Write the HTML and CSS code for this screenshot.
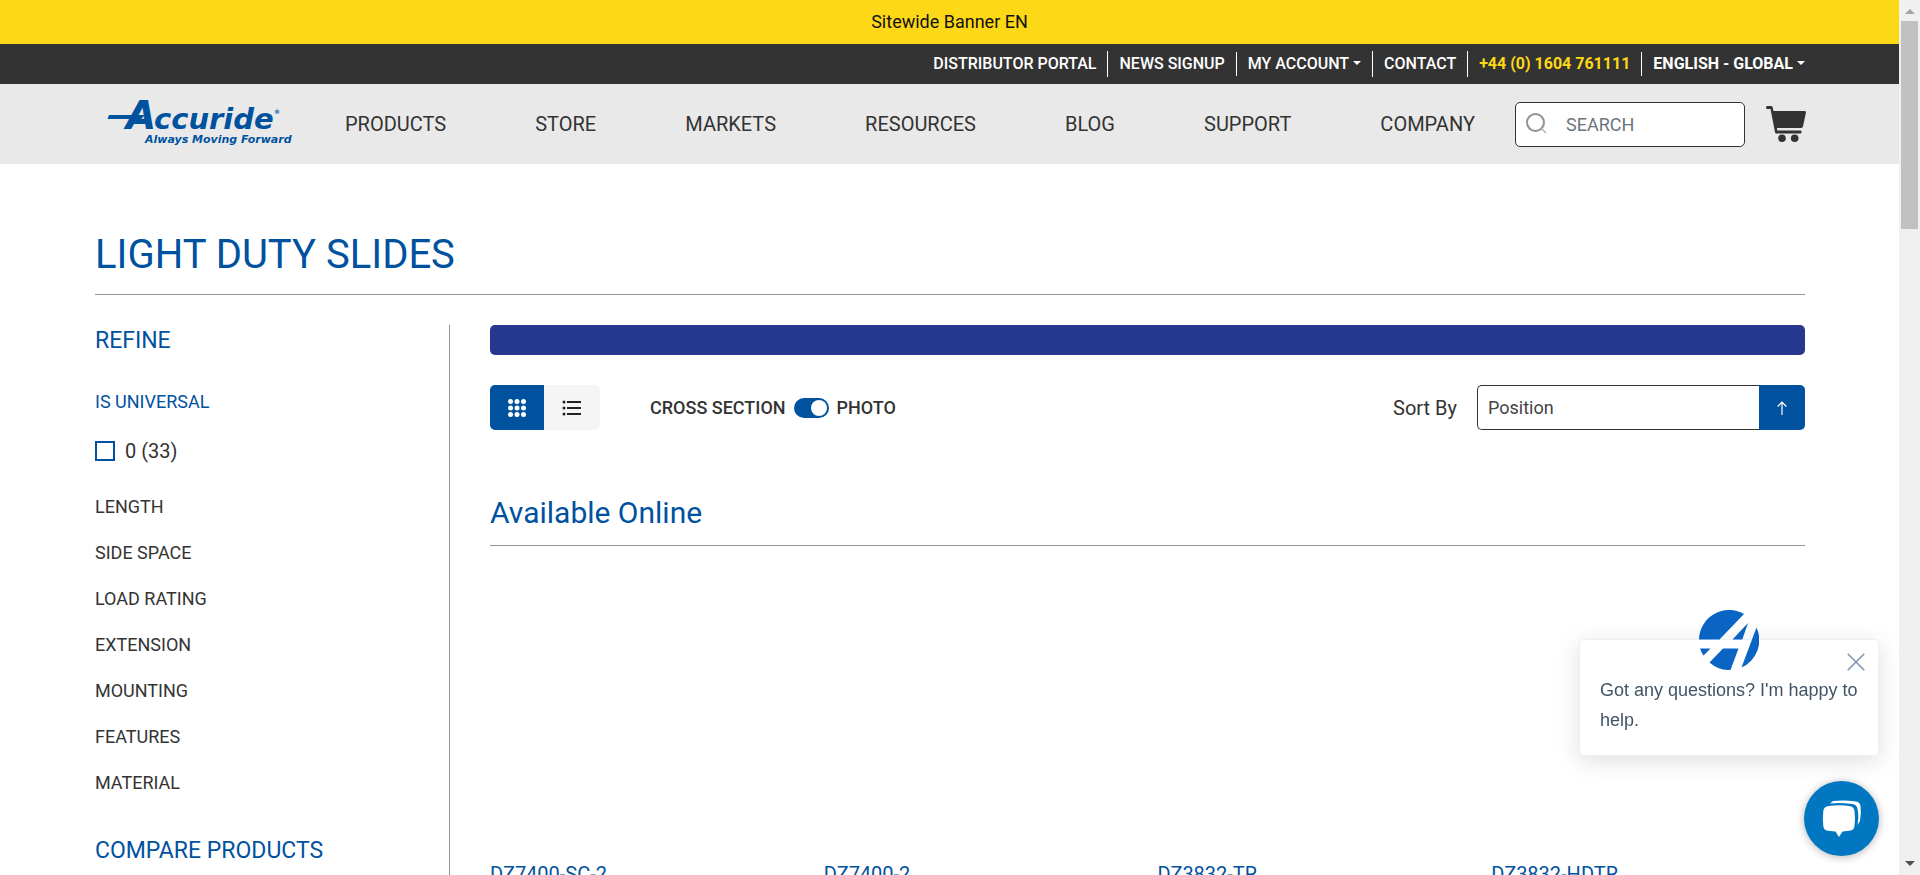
FILE: index.html
```html
<!DOCTYPE html>
<html lang="en">
<head>
<meta charset="utf-8">
<title>Light Duty Slides</title>
<link rel="stylesheet" href="styles.css">
</head>
<body>
<div class="window">
<div class="page">
  <div class="banner">Sitewide Banner EN</div>
  <nav class="topbar" aria-label="Account">
    <a href="#">DISTRIBUTOR PORTAL</a>
    <a href="#">NEWS SIGNUP</a>
    <button type="button" class="drop">MY ACCOUNT</button>
    <a href="#">CONTACT</a>
    <a href="#" class="phone">+44 (0) 1604 761111</a>
    <button type="button" class="drop strong">ENGLISH - GLOBAL</button>
  </nav>
  <header class="header">
    <a href="#" class="logo" aria-label="Accuride home">
      <svg width="200" height="60" viewBox="0 0 200 60">
        <path d="M14 21H50L46 25H12.500Z"/>
        <text x="31" y="35" class="logo-a">A</text>
        <text x="59" y="35" class="logo-name">ccuride</text>
        <text x="179" y="20" class="logo-reg">®</text>
        <text x="50" y="49" class="logo-tag">Always Moving Forward</text>
      </svg>
    </a>
    <nav class="menu" aria-label="Main">
      <a href="#">PRODUCTS</a>
      <a href="#">STORE</a>
      <a href="#">MARKETS</a>
      <a href="#">RESOURCES</a>
      <a href="#">BLOG</a>
      <a href="#">SUPPORT</a>
      <a href="#">COMPANY</a>
    </nav>
    <form class="search">
      <svg width="22" height="22" viewBox="0 0 22 22"><circle cx="9.500" cy="9.500" r="8.500" fill="none" stroke="#8e9295" stroke-width="2"/><path d="M15.500 15.500L20 20" stroke="#b5b5b5" stroke-width="1.500"/></svg>
      <input type="search" placeholder="SEARCH" aria-label="Search">
    </form>
    <a href="#" class="cart" aria-label="Cart">
      <svg width="40" height="36" viewBox="0 0 40 36" fill="#333"><path d="M1.200 0H5Q6.300 0 6.600 1.300L7.500 5H38.500Q40.300 5 39.900 6.800L37 20.600Q36.700 22 35.300 22H11L11.300 24.500H34.500Q35.600 24.500 35.600 26T34.500 27.500H10.500Q9.300 27.500 9 26.200L4.500 3H1.200Q0 3 0 1.500T1.200 0Z"/><circle cx="16" cy="32.200" r="3.800"/><circle cx="28.700" cy="32.200" r="3.800"/></svg>
    </a>
  </header>

  <main class="content">
    <h1>LIGHT DUTY SLIDES</h1>
    <div class="columns">
      <aside class="sidebar">
        <h2>REFINE</h2>
        <button type="button" class="facet open">IS UNIVERSAL</button>
        <label class="option"><input type="checkbox">0 (33)</label>
        <div class="facets">
          <button type="button" class="facet">LENGTH</button>
          <button type="button" class="facet">SIDE SPACE</button>
          <button type="button" class="facet">LOAD RATING</button>
          <button type="button" class="facet">EXTENSION</button>
          <button type="button" class="facet">MOUNTING</button>
          <button type="button" class="facet">FEATURES</button>
          <button type="button" class="facet">MATERIAL</button>
        </div>
        <h2>COMPARE PRODUCTS</h2>
      </aside>
      <section class="results">
        <div class="strip"></div>
        <div class="toolbar">
          <div class="views">
            <button type="button" class="view active" aria-label="Grid view">
              <svg width="18" height="18" viewBox="0 0 18 18" fill="#fff"><circle cx="2.500" cy="2.500" r="2.500"/><circle cx="9" cy="2.500" r="2.500"/><circle cx="15.500" cy="2.500" r="2.500"/><circle cx="2.500" cy="9" r="2.500"/><circle cx="9" cy="9" r="2.500"/><circle cx="15.500" cy="9" r="2.500"/><circle cx="2.500" cy="15.500" r="2.500"/><circle cx="9" cy="15.500" r="2.500"/><circle cx="15.500" cy="15.500" r="2.500"/></svg>
            </button>
            <button type="button" class="view" aria-label="List view">
              <svg width="20" height="16" viewBox="0 0 20 16" fill="#222"><circle cx="2" cy="2" r="1.500"/><circle cx="2" cy="8" r="1.500"/><circle cx="2" cy="14" r="1.500"/><path d="M5 1H19V3H5ZM5 7H19V9H5ZM5 13H19V15H5Z"/></svg>
            </button>
          </div>
          <label class="switch"><span>CROSS SECTION</span><input type="checkbox" checked><span>PHOTO</span></label>
          <label class="sort-label" for="sort">Sort By</label>
          <div class="sort">
            <select id="sort"><option>Position</option></select>
            <button type="button" aria-label="Ascending">
              <svg width="10" height="14" viewBox="0 0 10 14" fill="none" stroke="#fff" stroke-width="1.200"><path d="M5 14V1M.7 5.500L5 1L9.300 5.500"/></svg>
            </button>
          </div>
        </div>
        <h3>Available Online</h3>
        <div class="products">
          <a href="#">DZ7400-SC-2</a>
          <a href="#">DZ7400-2</a>
          <a href="#">DZ3832-TR</a>
          <a href="#">DZ3832-HDTR</a>
        </div>
      </section>
    </div>
  </main>
</div>
<div class="scrollbar" aria-hidden="true">
  <svg width="10" height="5" viewBox="0 0 10 5"><path d="M0 5L5 0L10 5Z" fill="#a3a3a3"/></svg>
  <div class="thumb"></div>
  <svg width="10" height="5" viewBox="0 0 10 5"><path d="M0 0L5 5L10 0Z" fill="#505050"/></svg>
</div>
</div>

<div class="chat">
  <div class="bubble">
    <svg class="avatar" width="60" height="60" viewBox="0 0 60 60">
      <path fill="#0a64c4" d="M0 29.500A30 30 0 0 1 45 4L20.500 29.500ZM33.500 29.500L49 13L43.300 29.500ZM57.500 17.500A30 30 0 0 1 42.500 57.500ZM1 38.500H11.500L4.500 45.500A30 30 0 0 1 1 38.500ZM24 38.500H39.500L31.500 60A30 30 0 0 1 10.500 52.500Z"/>
    </svg>
    <button type="button" class="close" aria-label="Close">
      <svg width="18" height="18" viewBox="0 0 18 18" stroke="#7c98b6" stroke-width="1.600"><path d="M.7.7L17.300 17.300M17.300.7L.7 17.300"/></svg>
    </button>
    <p>Got any questions? I'm happy to help.</p>
  </div>
  <button type="button" class="launcher" aria-label="Open chat">
    <svg width="40" height="38" viewBox="0 0 40 38" fill="#fff"><path d="M7 6Q17 4.500 27 6Q32 6.500 32.500 11Q33.500 19 32.500 26Q32 30.500 27.500 30.700L20.500 31.500L17 37L13.500 31.500L6 30.700Q1.800 30.500 1.300 26Q.5 19 1.300 11Q1.800 6.500 7 6Z"/><path d="M8 3.500L11 1Q23 0 34 1.500Q38 2 38.500 6Q39.500 13 38 21L35.500 25Q37 16 35.500 9Q35 4.500 30 4Q19 2.500 8 3.500Z"/></svg>
  </button>
</div>
</body>
</html>
```

FILE: styles.css
```css
* { box-sizing: border-box; }
body { margin: 0; font-family: Roboto, "Liberation Sans", sans-serif; font-size: 18px; color: #333; background: #fff; }
a { color: inherit; text-decoration: none; }
button { font: inherit; color: inherit; background: none; border: 0; padding: 0; cursor: pointer; }
svg { display: block; }
h1, h2, h3, p { margin: 0; font-weight: 400; }

.window { display: grid; grid-template-columns: minmax(0, 1fr) 21px; height: 100vh; overflow: hidden; }
.page { overflow: hidden; }

.banner { background: #fdd816; color: #111; line-height: 44px; text-align: center; }

.topbar { display: flex; justify-content: flex-end; align-items: center; height: 40px; padding: 0 94px; background: #333; color: #fff; font-size: 16px; font-weight: 500; }
.topbar > * { line-height: 26px; padding: 0 11px; border-left: 1px solid #fff; }
.topbar > :first-child { border-left: 0; }
.topbar > :last-child { padding-right: 0; }
.topbar .phone { color: #fdd816; font-weight: 700; }
.topbar .drop { line-height: 24px; }
.topbar .strong { font-weight: 700; }
.drop::after { content: ""; display: inline-block; margin-left: 4px; vertical-align: 4px; border: 4px solid transparent; border-top-color: #fff; border-bottom: 0; }

.header { display: flex; align-items: center; height: 80px; padding: 0 93px 0 95px; background: #e9e9e9; }
.logo { margin-right: 50px; }
.logo svg { fill: #00529f; font-family: "DejaVu Sans", sans-serif; font-weight: 700; font-style: italic; }
.logo-a { font-size: 39px; }
.logo-name { font-size: 29px; }
.logo-reg { font-size: 6px; }
.logo-tag { font-size: 11px; }
.menu { flex: 1; display: flex; justify-content: space-between; font-size: 20px; }
.search { display: flex; align-items: center; width: 230px; height: 45px; margin-left: 40px; padding: 0 10px; border: 1px solid #333; border-radius: 5px; background: #fff; }
.search input { flex: 1; min-width: 0; margin-left: 18px; padding: 0; border: 0; outline: 0; background: none; font: inherit; }
.search input::placeholder { color: #6c757d; }
.cart { margin-left: 21px; }

.content { padding: 67px 94px 0 95px; }
h1 { padding-bottom: 15px; border-bottom: 1px solid #939598; font-size: 40px; line-height: 48px; color: #00529f; }
.columns { display: grid; grid-template-columns: 355px minmax(0, 1fr); gap: 40px; margin-top: 30px; }
.sidebar { border-right: 1px solid #939598; min-height: 640px; }
h2 { font-size: 23px; line-height: 32px; color: #00529f; }
.facet { display: block; height: 46px; }
.facet.open { margin-top: 21px; color: #00529f; }
.option { display: flex; align-items: center; gap: 10px; margin-top: 12px; height: 30px; font-size: 20px; }
.option input { appearance: none; width: 20px; height: 20px; margin: 0; border: 2px solid #00529f; }
.facets { margin: 17px 0 30px; }

.strip { height: 30px; border-radius: 5px; background: #26388d; }
.toolbar { display: flex; align-items: center; margin-top: 30px; }
.views { display: flex; height: 45px; border-radius: 5px; overflow: hidden; }
.view { display: grid; place-items: center; width: 56px; background: #f5f5f5; }
.view.active { width: 54px; background: #00529f; }
.switch { display: flex; align-items: center; gap: 8px; margin-left: 50px; font-weight: 500; }
.switch input { appearance: none; display: flex; align-items: center; justify-content: flex-end; width: 35px; height: 20px; margin: 0; padding: 2px; border-radius: 10px; background: #00529f; }
.switch input::before { content: ""; width: 16px; height: 16px; border-radius: 50%; background: #fff; }
.sort-label { margin-left: auto; font-size: 20px; }
.sort { display: flex; width: 328px; height: 45px; margin-left: 20px; }
.sort select { flex: 1; appearance: none; padding: 0 10px; border: 1px solid #333; border-right: 0; border-radius: 5px 0 0 5px; background: #fff; color: #444; font: inherit; }
.sort button { display: grid; place-items: center; width: 46px; border-radius: 0 5px 5px 0; background: #00529f; }
h3 { margin-top: 63px; padding-bottom: 12px; border-bottom: 1px solid #939598; font-size: 30px; line-height: 40px; color: #00529f; }
.products { display: grid; grid-template-columns: repeat(4, minmax(0, 1fr)); gap: 20px; padding-top: 315px; font-size: 20px; line-height: 26px; color: #00529f; }

.scrollbar { display: flex; flex-direction: column; align-items: center; padding: 9px 0; background: #f0f0f0; }
.thumb { width: 17px; height: 208px; margin: 7px 0 auto; background: #c1c1c1; }

.chat { position: fixed; right: 41px; bottom: 19px; display: flex; flex-direction: column; align-items: flex-end; gap: 25px; }
.bubble { position: relative; width: 300px; padding: 35px 20px 20px; border: 1px solid #eaf0f6; border-radius: 4px; background: #fff; box-shadow: 0 5px 25px rgba(0, 0, 0, .13); color: #425466; font: 18px/30px "Liberation Sans", sans-serif; }
.avatar { position: absolute; top: -30px; left: 119px; }
.close { position: absolute; top: 13px; right: 13px; }
.launcher { display: grid; place-items: center; width: 75px; height: 75px; border-radius: 50%; background: #0077c0; box-shadow: 0 1px 8px rgba(0, 0, 0, .3); }
```
